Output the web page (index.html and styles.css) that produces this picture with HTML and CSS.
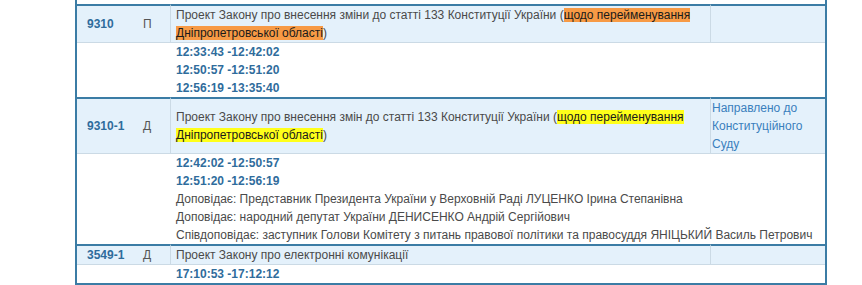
FILE: index.html
```html
<!DOCTYPE html>
<html lang="uk">
<head>
<meta charset="utf-8">
<title>Порядок денний</title>
<link rel="stylesheet" href="styles.css">
</head>
<body>
<div class="page">
<table class="agenda">
  <colgroup>
    <col class="c-num"><col class="c-type"><col class="c-title"><col class="c-status">
  </colgroup>
  <tbody>
    <tr class="prev"><td colspan="4"></td></tr>

    <tr class="head">
      <td class="num">9310</td>
      <td class="type">П</td>
      <td class="title">Проект Закону про внесення зміни до статті 133 Конституції України (<span class="hl-orange">щодо перейменування Дніпропетровської області</span>)</td>
      <td class="status"></td>
    </tr>
    <tr class="body">
      <td colspan="2"></td>
      <td colspan="2" class="info">
        <div class="time">12:33:43 -12:42:02</div>
        <div class="time">12:50:57 -12:51:20</div>
        <div class="time">12:56:19 -13:35:40</div>
      </td>
    </tr>

    <tr class="head">
      <td class="num">9310-1</td>
      <td class="type">Д</td>
      <td class="title">Проект Закону про внесення змін до статті 133 Конституції України (<span class="hl-yellow">щодо перейменування Дніпропетровської області</span>)</td>
      <td class="status">Направлено до Конституційного Суду</td>
    </tr>
    <tr class="body">
      <td colspan="2"></td>
      <td colspan="2" class="info">
        <div class="time">12:42:02 -12:50:57</div>
        <div class="time">12:51:20 -12:56:19</div>
        <div class="speaker">Доповідає: Представник Президента України у Верховній Раді ЛУЦЕНКО Ірина Степанівна</div>
        <div class="speaker">Доповідає: народний депутат України ДЕНИСЕНКО Андрій Сергійович</div>
        <div class="speaker">Співдоповідає: заступник Голови Комітету з питань правової політики та правосуддя ЯНІЦЬКИЙ Василь Петрович</div>
      </td>
    </tr>

    <tr class="head">
      <td class="num">3549-1</td>
      <td class="type">Д</td>
      <td class="title">Проект Закону про електронні комунікації</td>
      <td class="status"></td>
    </tr>
    <tr class="body">
      <td colspan="2"></td>
      <td colspan="2" class="info">
        <div class="time">17:10:53 -17:12:12</div>
      </td>
    </tr>
  </tbody>
</table>
</div>
</body>
</html>
```

FILE: styles.css
```css
html, body {
  margin: 0;
  padding: 0;
  background: #ffffff;
}

.page {
  padding-left: 75px;
  font-family: "Liberation Sans", Arial, sans-serif;
  font-size: 12px;
  line-height: 18px;
  color: #4a4a4a;
}

.agenda {
  width: 752px;
  table-layout: fixed;
  border-collapse: separate;
  border-spacing: 0;
  border-left: 2px solid #3b7ca5;
  border-right: 2px solid #3b7ca5;
  border-bottom: 2px solid #3b7ca5;
}

.c-num { width: 60px; }
.c-type { width: 33px; }
.c-title { width: 540px; }
.c-status { width: 115px; }

.agenda td {
  padding: 0;
  vertical-align: middle;
}

.prev td {
  height: 4px;
  line-height: 4px;
  font-size: 0;
}

.head td {
  background: #e4f1fb;
  border-top: 2px solid #3b7ca5;
  border-bottom: 1px solid #cbdae5;
}

.head .num {
  padding-left: 10px;
  font-weight: bold;
  color: #2f6c9c;
}

.head .type {
  padding-left: 6px;
  color: #555555;
}

.head .title {
  border-left: 1px solid #cbdae5;
  padding-left: 5px;
  padding-right: 6px;
}

.head .status {
  border-left: 1px solid #cbdae5;
  padding-left: 1px;
  vertical-align: top;
  color: #3a7fbd;
}

.hl-orange {
  background: #f79a45;
  color: #1a1a1a;
}

.hl-yellow {
  background: #ffff1a;
  color: #1a1a1a;
}

.body td {
  background: #ffffff;
}

.body .info {
  padding-left: 6px;
}

.time {
  font-weight: bold;
  color: #2f6c9c;
}

.speaker {
  color: #4a4a4a;
  white-space: nowrap;
}
```
